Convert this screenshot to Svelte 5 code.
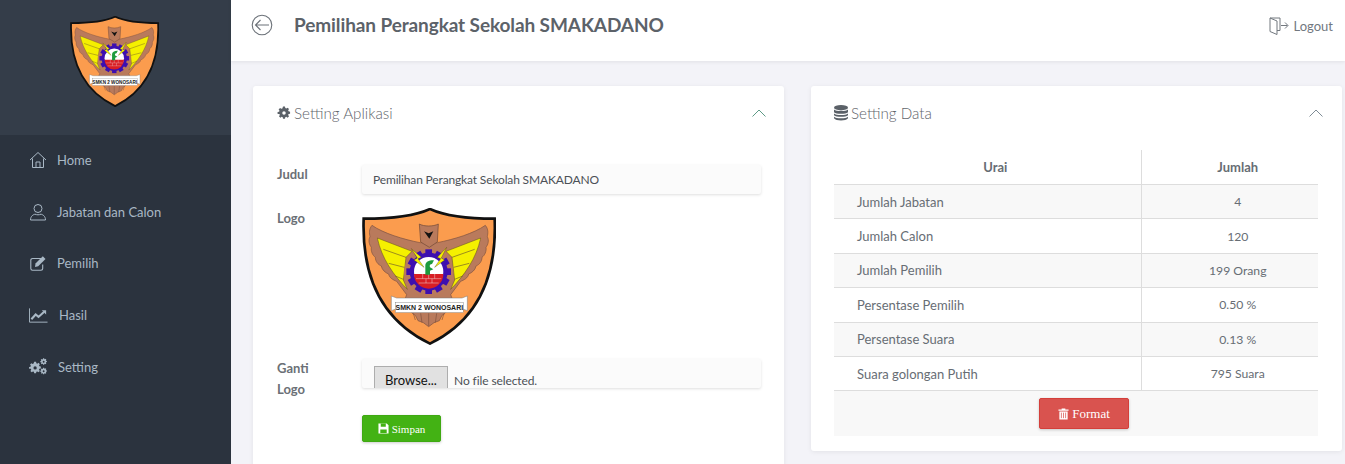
<script>
  const nav = ['Home', 'Jabatan dan Calon', 'Pemilih', 'Hasil', 'Setting'];
  const rows = [
    ['Jumlah Jabatan', '4'],
    ['Jumlah Calon', '120'],
    ['Jumlah Pemilih', '199 Orang'],
    ['Persentase Pemilih', '0.50 %'],
    ['Persentase Suara', '0.13 %'],
    ['Suara golongan Putih', '795 Suara']
  ];
  const teeth = [0, 30, 60, 90, 120, 150, 180, 210, 240, 270, 300, 330];
  const gearPath = 'M10.3 1h3.4l.5 2.6 1.8.7 2.2-1.5 2.4 2.4-1.5 2.2.7 1.8 2.6.5v3.4l-2.6.5-.7 1.8 1.5 2.2-2.4 2.4-2.2-1.5-1.8.7-.5 2.6h-3.4l-.5-2.6-1.8-.7-2.2 1.5-2.4-2.4 1.5-2.2-.7-1.8L1 13.7v-3.4l2.6-.5.7-1.8-1.5-2.2 2.4-2.4 2.2 1.5 1.8-.7zM12 9a3 3 0 1 0 0 6 3 3 0 0 0 0-6z';
</script>

{#snippet logo(cls)}
  <svg class={cls} viewBox="36 24 402 411" role="img" aria-label="Logo SMKN 2 Wonosari">
    <path d="M240 27C290 50 360 56 434 56C440 200 405 350 240 431C72 350 36 200 41 56C120 56 190 50 240 27Z" fill="#fb9c4e" stroke="#111" stroke-width="8"/>
    <path d="M210 128C160 118 100 100 66 76C56 88 58 100 60 110C54 122 58 134 64 142C62 154 68 166 76 172C76 184 84 194 94 198C96 210 106 218 116 222C118 234 130 240 140 244L170 284L164 300C172 320 182 340 196 346L204 362L220 368L236 380L252 368L268 362L276 346C290 340 300 320 308 300L302 284L332 244C342 240 354 234 356 222C366 218 376 210 378 198C388 194 396 184 396 172C404 166 410 154 408 142C414 134 418 122 412 110C414 100 416 88 406 76C372 100 312 118 262 128Z" fill="#b97a5c" stroke="#7d5240" stroke-width="2"/>
    <path d="M82 114L186 154L168 172L160 240L172 268C130 225 95 175 82 114Z" fill="#f5f000" stroke="#5c4a20" stroke-width="1.5"/>
    <path d="M392 114L288 154L306 172L314 240L302 268C344 225 379 175 392 114Z" fill="#f5f000" stroke="#5c4a20" stroke-width="1.5"/>
    <path d="M100 148L168 172M116 190L163 202M136 228L160 238M374 148L306 172M358 190L311 202M338 228L314 238" stroke="#6f5a28" stroke-width="2" fill="none"/>
    <circle cx="236" cy="218" r="74" fill="#b97a5c"/>
    <path d="M208 72C222 80 250 80 265 72L262 126L238 142L212 126Z" fill="#b97a5c" stroke="#6e4735" stroke-width="2"/>
    <path d="M222 94L236 100L250 94L238 116Z" fill="#111"/>
    <path d="M190 340L196 360M212 340L216 368M236 340V378M260 340L256 368M282 340L276 360" stroke="#7d5240" stroke-width="2" fill="none"/>
    {#each teeth as a}
      <rect x="226" y="148" width="20" height="18" fill="#3d0fb0" transform="rotate({a} 236 215)"/>
    {/each}
    <circle cx="236" cy="215" r="57" fill="#3d0fb0"/>
    <circle cx="236" cy="215" r="44" fill="#fff"/>
    <path d="M192 222H280A44 44 0 0 1 192 222Z" fill="#d81e24"/>
    <path d="M198 236H274M206 249H266M218 222V236M236 222V236M254 222V236M228 236V249M246 236V249" stroke="#f3d4d4" stroke-width="1.5" fill="none"/>
    <path d="M226 224V196C226 186 238 180 252 181L246 192C240 192 238 196 240 202L250 208L240 212V224Z" fill="#1d9b3d"/>
    <path d="M184 146L214 172L204 176L222 202L192 180L202 174Z" fill="#f6f000" stroke="#3b3b10" stroke-width="1"/>
    <path d="M290 142L262 172L272 176L254 202L284 180L274 174Z" fill="#f6f000" stroke="#3b3b10" stroke-width="1"/>
    <path d="M124 288L140 294L336 294L352 288V332L336 326H140L124 332Z" fill="#fff" stroke="#777" stroke-width="1.5"/>
    <rect x="136" y="308" width="204" height="30" fill="#fff" stroke="#555" stroke-width="1"/>
    <text x="238" y="330" text-anchor="middle" class="logotext">SMKN 2 WONOSARI</text>
  </svg>
{/snippet}

{#snippet navIcon(i)}
  {#if i === 0}
    <svg class="ni" viewBox="0 0 18 18"><path d="M1 9L9 1.5 17 9M3.5 7.5V16.5H14.5V7.5M7 16.5V11H11V16.5" fill="none" stroke="currentColor" stroke-width="1"/></svg>
  {:else if i === 1}
    <svg class="ni" viewBox="0 0 18 18"><circle cx="9" cy="5.5" r="4" fill="none" stroke="currentColor"/><path d="M1.5 17C1.5 13 4.5 11.5 6 11.2C8 12 10 12 12 11.2C13.5 11.5 16.5 13 16.5 17Z" fill="none" stroke="currentColor"/></svg>
  {:else if i === 2}
    <svg class="ni" viewBox="0 0 18 18"><path d="M12 4.5H3.5A1.7 1.7 0 0 0 1.8 6.2V14.5A1.7 1.7 0 0 0 3.5 16.2H12A1.7 1.7 0 0 0 13.7 14.5V10.5" fill="none" stroke="currentColor" stroke-width="1.1"/><path d="M6.5 9.5L13.8 2.2 16.5 4.9 9.2 12.2 6 13Z" fill="currentColor"/></svg>
  {:else if i === 3}
    <svg class="chart" viewBox="0 0 20 15"><path d="M.5 0V14.5H19.5" fill="none" stroke="currentColor"/><path d="M2.5 11.5L7 6.5 10 9 16 3.5" fill="none" stroke="currentColor" stroke-width="2.2"/><path d="M13.5 2H18V6.5Z" fill="currentColor"/></svg>
  {:else}
    <svg class="cogs" viewBox="0 0 19 17">
      <g transform="translate(-.5 3) scale(.58)"><path d={gearPath} fill="currentColor" fill-rule="evenodd"/></g>
      <g transform="translate(11.5 -.5) scale(.33)"><path d={gearPath} fill="currentColor" fill-rule="evenodd"/></g>
      <g transform="translate(11.5 9.5) scale(.33)"><path d={gearPath} fill="currentColor" fill-rule="evenodd"/></g>
    </svg>
  {/if}
{/snippet}

{#snippet chevron()}
  <svg class="chev" viewBox="0 0 14 8"><path d="M.5 7.5L7 1l6.5 6.5" fill="none" stroke="currentColor"/></svg>
{/snippet}

<div class="page">
  <aside class="side">
    <div class="brand">{@render logo('logo-small')}</div>
    <nav class="nav">
      {#each nav as item, i}
        <div class="nav-item" class:wide={i === 3} class:mid={i === 4}>
          {@render navIcon(i)}
          <span>{item}</span>
        </div>
      {/each}
    </nav>
  </aside>

  <main class="main">
    <header class="top">
      <svg class="back" viewBox="0 0 22 22"><circle cx="11" cy="11" r="9.8" fill="none" stroke="currentColor" stroke-width="1.1"/><path d="M18 11H4.5M9.5 6L4.5 11l5 5" fill="none" stroke="currentColor" stroke-width="1.1"/></svg>
      <h1>Pemilihan Perangkat Sekolah SMAKADANO</h1>
      <div class="logout">
        <svg class="door" viewBox="0 0 20 18"><path d="M1 1H11V13.5H8M1 1L8 4V17.5L1 14.5ZM12 8.5H18.5M16 5.5L19 8.5 16 11.5" fill="none" stroke="currentColor"/></svg>
        <span>Logout</span>
      </div>
    </header>

    <div class="content">
      <section class="card left">
        <div class="card-head">
          <h2>
            <svg class="hicon" viewBox="0 0 24 24"><path d={gearPath} fill="currentColor" fill-rule="evenodd"/></svg>
            Setting Aplikasi
          </h2>
          <span class="c-green">{@render chevron()}</span>
        </div>
        <div class="form">
          <div class="label one">Judul</div>
          <div class="field text">Pemilihan Perangkat Sekolah SMAKADANO</div>
          <div class="label two">Logo</div>
          <div class="logo-wrap">{@render logo('logo-big')}</div>
          <div class="label three">Ganti Logo</div>
          <div class="field file">
            <span class="browse">Browse...</span>
            <span class="nofile">No file selected.</span>
          </div>
          <div class="save-cell">
            <button class="btn save">
              <svg class="bi" viewBox="0 0 12 12"><path d="M.5.5H9.5L11.5 2.5V11.5H.5Z" fill="currentColor"/><path d="M3 .5H8.5V4H3ZM2.5 7H9.5V11H2.5Z" fill="#43b214"/></svg>
              Simpan
            </button>
          </div>
        </div>
      </section>

      <section class="card right">
        <div class="card-head">
          <h2>
            <svg class="hicon db" viewBox="0 0 14 16"><ellipse cx="7" cy="2.7" rx="7" ry="2.7" fill="currentColor"/><path d="M0 4.6C2 6.6 12 6.6 14 4.6V7.2C12 9.2 2 9.2 0 7.2ZM0 8.6C2 10.6 12 10.6 14 8.6V10.2C12 12.2 2 12.2 0 10.2ZM0 11.8C2 13.8 12 13.8 14 11.8V13.3C12 16.3 2 16.3 0 13.3Z" fill="currentColor"/></svg>
            Setting Data
          </h2>
          <span class="c-grey">{@render chevron()}</span>
        </div>
        <table>
          <thead>
            <tr><th>Urai</th><th>Jumlah</th></tr>
          </thead>
          <tbody>
            {#each rows as r}
              <tr><td class="name">{r[0]}</td><td class="val">{r[1]}</td></tr>
            {/each}
            <tr class="foot">
              <td colspan="2">
                <button class="btn format">
                  <svg class="bi trash" viewBox="0 0 12 13"><path d="M4 1.5V.5H8V1.5H11.5V3H.5V1.5ZM1.5 3.8H10.5V12.5H1.5Z" fill="currentColor"/><path d="M3.7 5V11M6 5V11M8.3 5V11" stroke="#d9534f" stroke-width=".8"/></svg>
                  Format
                </button>
              </td>
            </tr>
          </tbody>
        </table>
      </section>
    </div>
  </main>
</div>

<style>
  :global(body) { margin: 0; background: #f3f3f8; }
  .page {
    display: flex;
    height: 464px;
    overflow: hidden;
    font-family: "Lato", "Noto Sans", sans-serif;
    color: #676d74;
    font-size: 13px;
  }
  .side { width: 231px; flex: none; background: #2b333e; }
  .brand {
    height: 135px;
    background: #343d49;
    display: flex;
    justify-content: center;
    padding-top: 16px;
    box-sizing: border-box;
    padding-right: 2px;
  }
  .logo-small { width: 89px; height: 91px; }
  .nav { display: flex; flex-direction: column; margin-top: -1px; }
  .nav-item {
    height: 51.75px;
    display: flex;
    align-items: center;
    gap: 10px;
    padding-left: 29px;
    color: #a9b8c5;
    font-size: 13px;
  }
  .nav-item.wide { gap: 11px; }
  .nav-item.mid { gap: 11px; }
  .ni { width: 18px; height: 18px; flex: none; }
  .chart { width: 19px; height: 15px; flex: none; }
  .cogs { width: 18px; height: 17px; flex: none; }
  .main { flex: 1; min-width: 0; display: flex; flex-direction: column; }
  .top {
    height: 61px;
    flex: none;
    background: #fff;
    box-shadow: 0 1px 4px rgba(0, 0, 0, .08);
    display: flex;
    align-items: center;
    padding: 0 12px 11px 20px;
    box-sizing: border-box;
    color: #5f656c;
  }
  .back { width: 22px; height: 22px; color: #6b7178; }
  h1 {
    margin: 0 0 2px 21px;
    font-size: 19px;
    font-weight: 700;
    color: #5c6269;
    letter-spacing: -.1px;
  }
  .logout { margin-left: auto; display: flex; align-items: center; gap: 5px; font-size: 13px; color: #72787f; padding-top: 1px; }
  .door { width: 20px; height: 18px; }
  .content {
    display: flex;
    gap: 27px;
    align-items: flex-start;
    padding: 25px 3px 0 22px;
  }
  .card {
    width: 531px;
    flex: none;
    background: #fff;
    border-radius: 3px;
    box-shadow: 0 1px 5px rgba(0, 0, 0, .07);
    box-sizing: border-box;
  }
  .left { height: 400px; padding: 0 23px 0 24px; }
  .right { padding: 0 24px 15px 23px; }
  .card-head {
    display: flex;
    justify-content: space-between;
    align-items: center;
    height: 54px;
  }
  h2 {
    margin: 0;
    font-size: 15.2px;
    font-weight: 300;
    color: #5f656c;
    display: flex;
    align-items: center;
    gap: 3px;
  }
  .hicon { width: 14px; height: 14px; color: #5b6168; }
  .db { height: 16px; }
  .chev { display: block; width: 14px; height: 8px; }
  .c-green { color: #5d9a86; margin-right: -5px; }
  .c-grey { color: #7f8c96; margin-right: 19px; transform: translateX(24px); }
  .form {
    display: grid;
    grid-template-columns: 85px 399px;
    grid-template-rows: 29px 165px 29px auto;
    margin-top: 25px;
  }
  .label { font-weight: 700; color: #6b7076; line-height: 21px; }
  .one { margin-top: -1px; }
  .two { margin-top: 14px; }
  .three { margin-top: -1px; width: 50px; }
  .field {
    background: #fbfbfb;
    border-radius: 2px;
    box-shadow: 0 1px 3px rgba(0, 0, 0, .13);
    box-sizing: border-box;
    height: 29px;
    overflow: hidden;
  }
  .text { padding: 0 11px; line-height: 30px; color: #4b5056; font-size: 12px; letter-spacing: -.15px; }
  .logo-wrap { padding-top: 14px; }
  .logo-big { display: block; width: 134px; height: 137px; }
  .file { display: flex; gap: 6px; padding: 7px 0 0 12px; align-items: flex-start; }
  .browse {
    flex: none;
    width: 74px;
    height: 30px;
    box-sizing: border-box;
    background: #e1e1e1;
    border: 1px solid #adadad;
    color: #111;
    font-size: 13px;
    text-align: center;
    line-height: 27px;
  }
  .nofile { line-height: 29px; color: #4b5056; font-size: 12px; letter-spacing: -.1px; }
  .save-cell { grid-column: 2; padding-top: 27px; }
  .btn {
    border: 1px solid;
    border-radius: 2px;
    color: #fff;
    font-family: "Liberation Serif", serif;
    display: inline-flex;
    align-items: center;
    justify-content: center;
    gap: 3px;
    padding: 0;
    box-shadow: 0 1px 3px rgba(0, 0, 0, .2);
  }
  .save {
    width: 79px;
    height: 27px;
    background: #43b214;
    border-color: #3fa912;
    font-size: 11px;
  }
  .format {
    width: 90px;
    height: 31px;
    background: #d9534f;
    border-color: #d43f3a;
    font-size: 13px;
  }
  .bi { width: 11px; height: 11px; }
  .trash { height: 12px; }
  table {
    width: 484px;
    border-collapse: collapse;
    table-layout: fixed;
    margin-top: 10px;
  }
  th {
    height: 34px;
    padding: 0 0 0 16px;
    font-weight: 700;
    color: #676d74;
    font-size: 13px;
    border-bottom: 1px solid #ddd;
  }
  th:first-child, td.name { width: 307px; border-right: 1px solid #ddd; box-sizing: border-box; }
  td { padding: 0; height: 33.4px; border-bottom: 1px solid #ddd; }
  tbody tr:nth-child(odd) td { background: #f8f8f8; }
  .name { padding-left: 23px; font-size: 13px; color: #676d74; }
  .val { text-align: center; color: #676d74; font-size: 12.2px; padding-left: 16px; }
  .foot td { height: 45px; border-bottom: 0; text-align: center; background: #f8f8f8 !important; padding-left: 16px; }
  .logotext { font-family: "Liberation Sans", sans-serif; font-size: 21px; font-weight: 700; fill: #222; }
</style>
